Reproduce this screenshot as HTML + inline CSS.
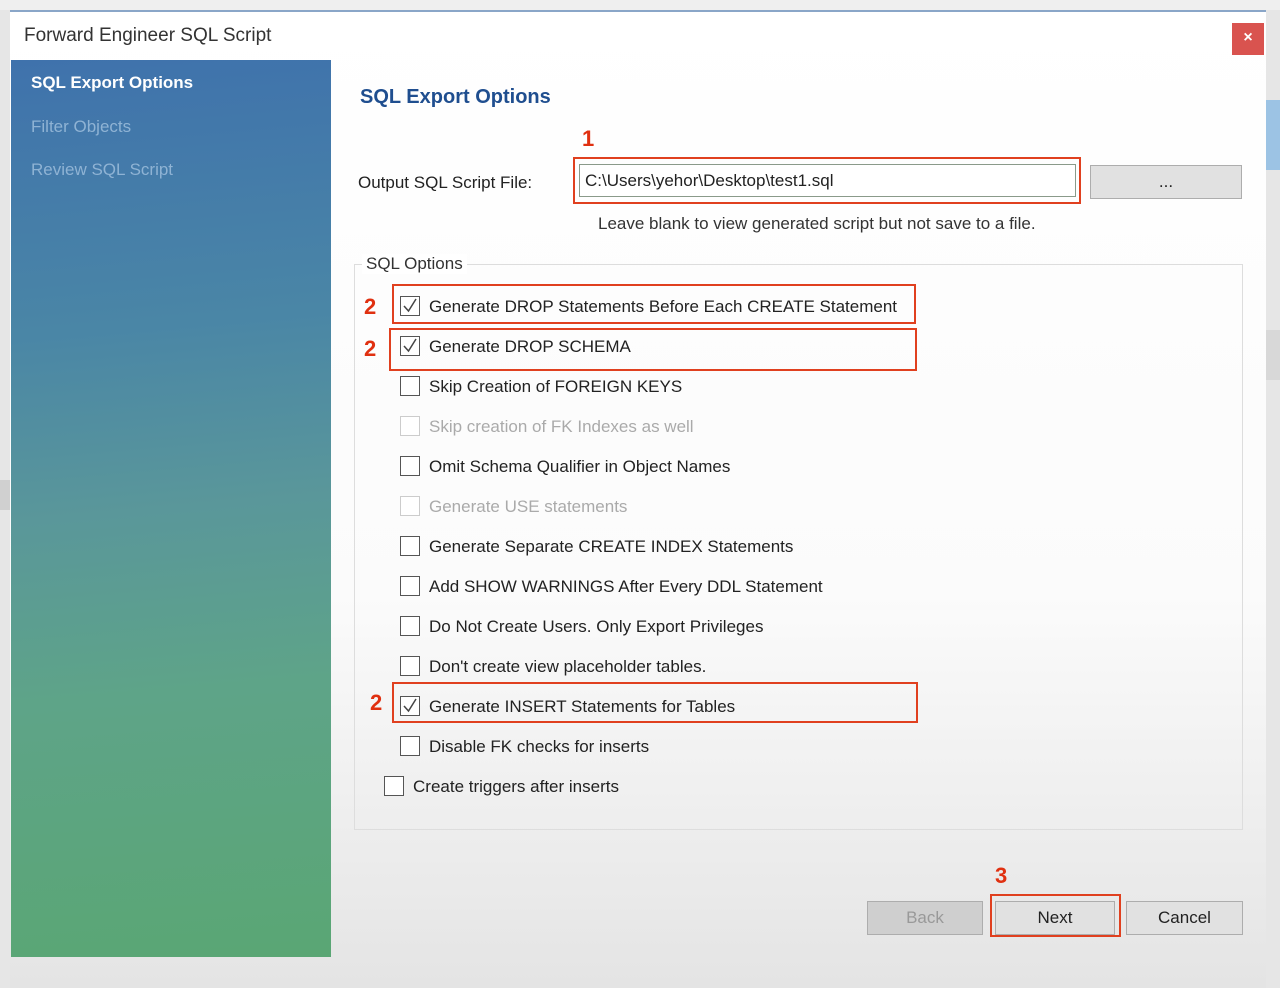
<!DOCTYPE html>
<html><head><meta charset="utf-8"><style>
*{margin:0;padding:0;box-sizing:border-box}
body{width:1280px;height:988px;position:relative;overflow:hidden;font-family:"Liberation Sans",sans-serif;background:#e6e6e6}
.abs{position:absolute}
#dlg{left:10px;top:10px;width:1256px;height:978px;background:linear-gradient(#ffffff 0%,#fbfbfb 60%,#e4e4e4 100%);border-top:2px solid #8aa6c8}
#side{left:11px;top:60px;width:320px;height:897px;background:linear-gradient(175deg,#3f72ac 0%,#4a86a6 30%,#5a979a 50%,#5ea488 70%,#5aa674 100%)}
.t{position:absolute;font-size:17px;color:#222;white-space:nowrap;letter-spacing:0;margin-top:1px}
.cb{position:absolute;width:20px;height:20px;border:1.5px solid #555;background:#fff}
.cb.dis{border-color:#ccc}
.red{position:absolute;border:2px solid #e0401f}
.num{position:absolute;color:#e03010;font-weight:bold;font-size:22px}
.btn{position:absolute;height:34px;background:#e1e1e1;border:1px solid #adadad;font-size:17px;text-align:center;line-height:32px;color:#222}
</style></head><body>
<div class="abs" style="left:0;top:0;width:1280px;height:10px;background:#efefef"></div>
<div class="abs" style="left:1266px;top:100px;width:14px;height:70px;background:#9cc3e4"></div>
<div class="abs" style="left:1266px;top:330px;width:14px;height:50px;background:#d8d8d8"></div>
<div class="abs" style="left:0;top:480px;width:10px;height:30px;background:#d0d0d0"></div>
<div id="dlg" class="abs"></div>
<div class="t" style="left:24px;top:24px;font-size:19px;color:#333">Forward Engineer SQL Script</div>
<div class="abs" style="left:1232px;top:23px;width:32px;height:32px;background:#d9534f;color:#fff;text-align:center;line-height:30px;font-size:16px;font-weight:bold">×</div>
<div id="side" class="abs"></div>
<div class="t" style="left:31px;top:72px;color:#fff;font-weight:bold">SQL Export Options</div>
<div class="t" style="left:31px;top:116px;color:#8fb3d4">Filter Objects</div>
<div class="t" style="left:31px;top:159px;color:#8fb3d4">Review SQL Script</div>
<div class="t" style="left:360px;top:85px;color:#1f4e8f;font-weight:bold;font-size:20px">SQL Export Options</div>
<div class="num" style="left:582px;top:126px">1</div>
<div class="t" style="left:358px;top:172px">Output SQL Script File:</div>
<div class="red" style="left:573px;top:157px;width:508px;height:47px"></div>
<div class="abs" style="left:579px;top:164px;width:497px;height:33px;border:1px solid #8a9a8a;background:#fff"></div>
<div class="t" style="left:585px;top:170px">C:\Users\yehor\Desktop\test1.sql</div>
<div class="btn" style="left:1090px;top:165px;width:152px">...</div>
<div class="t" style="left:598px;top:213px;color:#333">Leave blank to view generated script but not save to a file.</div>
<div class="abs" style="left:354px;top:264px;width:889px;height:566px;border:1px solid #ddd"></div>
<div class="t" style="left:362px;top:253px;background:#fff;padding:0 4px;color:#333">SQL Options</div>

<div class="num" style="left:364px;top:294px">2</div><div class="red" style="left:392px;top:284px;width:524px;height:40px"></div>
<div class="num" style="left:364px;top:336px">2</div><div class="red" style="left:389px;top:328px;width:528px;height:43px"></div>
<div class="num" style="left:370px;top:690px">2</div><div class="red" style="left:392px;top:682px;width:526px;height:41px"></div>

<div class="cb" style="left:400px;top:296px"></div><div class="t" style="left:429px;top:296px">Generate DROP Statements Before Each CREATE Statement</div>
<div class="cb" style="left:400px;top:336px"></div><div class="t" style="left:429px;top:336px">Generate DROP SCHEMA</div>
<div class="cb" style="left:400px;top:376px"></div><div class="t" style="left:429px;top:376px">Skip Creation of FOREIGN KEYS</div>
<div class="cb dis" style="left:400px;top:416px"></div><div class="t" style="left:429px;top:416px;color:#aaa">Skip creation of FK Indexes as well</div>
<div class="cb" style="left:400px;top:456px"></div><div class="t" style="left:429px;top:456px">Omit Schema Qualifier in Object Names</div>
<div class="cb dis" style="left:400px;top:496px"></div><div class="t" style="left:429px;top:496px;color:#aaa">Generate USE statements</div>
<div class="cb" style="left:400px;top:536px"></div><div class="t" style="left:429px;top:536px">Generate Separate CREATE INDEX Statements</div>
<div class="cb" style="left:400px;top:576px"></div><div class="t" style="left:429px;top:576px">Add SHOW WARNINGS After Every DDL Statement</div>
<div class="cb" style="left:400px;top:616px"></div><div class="t" style="left:429px;top:616px">Do Not Create Users. Only Export Privileges</div>
<div class="cb" style="left:400px;top:656px"></div><div class="t" style="left:429px;top:656px">Don't create view placeholder tables.</div>
<div class="cb" style="left:400px;top:696px"></div><div class="t" style="left:429px;top:696px">Generate INSERT Statements for Tables</div>
<div class="cb" style="left:400px;top:736px"></div><div class="t" style="left:429px;top:736px">Disable FK checks for inserts</div>
<div class="cb" style="left:384px;top:776px"></div><div class="t" style="left:413px;top:776px">Create triggers after inserts</div>

<svg class="abs" style="left:400px;top:296px" width="20" height="20"><path d="M4 10 L8.5 15 L16 3" fill="none" stroke="#444" stroke-width="1.5"/></svg>
<svg class="abs" style="left:400px;top:336px" width="20" height="20"><path d="M4 10 L8.5 15 L16 3" fill="none" stroke="#444" stroke-width="1.5"/></svg>
<svg class="abs" style="left:400px;top:696px" width="20" height="20"><path d="M4 10 L8.5 15 L16 3" fill="none" stroke="#444" stroke-width="1.5"/></svg>

<div class="num" style="left:995px;top:863px">3</div>
<div class="btn" style="left:867px;top:901px;width:116px;background:#cfcfcf;color:#999">Back</div>
<div class="btn" style="left:995px;top:901px;width:120px">Next</div>
<div class="red" style="left:990px;top:894px;width:131px;height:43px"></div>
<div class="btn" style="left:1126px;top:901px;width:117px">Cancel</div>
</body></html>
